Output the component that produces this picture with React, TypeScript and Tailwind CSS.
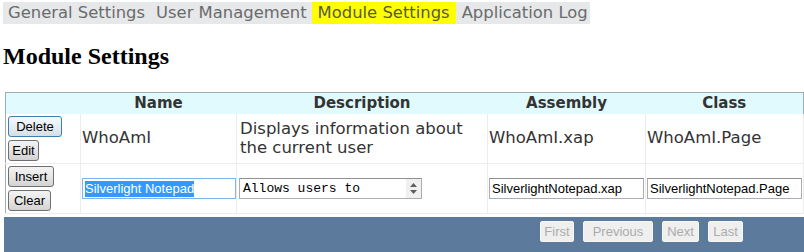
import React from "react";

const btnBase =
  "h-[21px] rounded-[3px] border text-[13px] leading-[19px] text-center text-black bg-gradient-to-b";

function Btn({ label, w, focused }: { label: string; w: string; focused?: boolean }) {
  return (
    <button
      className={`${btnBase} ${w} ${
        focused
          ? "border-[#3c7fb1] from-[#f5f9fc] via-[#e7eef3] to-[#d6dee4]"
          : "border-[#707070] from-[#f3f3f3] via-[#e6e6e6] to-[#d2d2d2]"
      }`}
      style={{ fontFamily: '"Liberation Sans", Arial, sans-serif' }}
    >
      {label}
    </button>
  );
}

function PagerBtn({ label, w }: { label: string; w: string }) {
  return (
    <span
      className={`${w} h-[21px] flex items-center justify-center rounded-[2px] border border-[#f7f7f7] bg-[#efefef] text-[13px] text-[#ababab]`}
    >
      {label}
    </span>
  );
}

export default function App() {
  const verdana = { fontFamily: '"DejaVu Sans", Verdana, sans-serif' };
  const arial = { fontFamily: '"Liberation Sans", Arial, sans-serif' };
  const mono = { fontFamily: '"Liberation Mono", "Courier New", monospace' };
  const cell = "border-r border-b border-[#ececec] p-0 align-middle";
  const inputBox =
    "h-[21px] border border-[#abadb3] border-t-[#8e9095] bg-white flex items-center text-[13px] text-black";
  const tab = "h-full flex items-center shrink-0 whitespace-nowrap";

  return (
    <div className="w-[804px] h-[252px] bg-white overflow-hidden relative">
      {/* Tabs */}
      <div
        className="ml-[3px] mt-[2px] w-fit h-[22px] bg-[#e6e8ea] flex items-center text-[16.4px] text-[#6b6b6b]"
        style={verdana}
      >
        <span className={`${tab} pl-[5px] pr-[6px]`}>General Settings</span>
        <span className={`${tab} px-[5px]`}>User Management</span>
        <span className={`${tab} px-[6px] bg-[#ffff00] text-[#5a5a3a]`}>Module Settings</span>
        <span className={`${tab} pl-[6px] pr-[2px]`}>Application Log</span>
      </div>

      {/* Heading */}
      <h2
        className="mt-[18px] ml-[3px] h-[28px] leading-[28px] text-[24px] font-bold text-black"
        style={{ fontFamily: '"Liberation Serif", "Times New Roman", serif' }}
      >
        Module Settings
      </h2>

      {/* Grid */}
      <div className="mt-[22px] ml-[5px] w-[798px]">
        <table
          className="table-fixed border-collapse w-[798px] border-t border-l border-r border-[#a3acb3]"
          style={verdana}
        >
          <colgroup>
            <col className="w-[75px]" />
            <col className="w-[156px]" />
            <col className="w-[251px]" />
            <col className="w-[158px]" />
            <col className="w-[158px]" />
          </colgroup>
          <thead>
            <tr className="h-[21px] bg-[#e0fafd] text-[15px] leading-[18px] font-bold text-[#333]">
              <th className="p-0"></th>
              <th className="p-0 text-center">Name</th>
              <th className="p-0 text-center">Description</th>
              <th className="p-0 text-center">Assembly</th>
              <th className="p-0 text-center">Class</th>
            </tr>
          </thead>
          <tbody className="text-[16.5px] text-[#333]">
            <tr className="h-[50px]">
              <td className={cell}>
                <div className="flex flex-col items-start gap-[3px] pl-[2px]">
                  <Btn label="Delete" w="w-[54px]" focused />
                  <Btn label="Edit" w="w-[31px]" />
                </div>
              </td>
              <td className={`${cell} pl-[1px]`}>WhoAmI</td>
              <td className={`${cell} pl-[3px] leading-[19px]`}>
                Displays information about the current user
              </td>
              <td className={`${cell} pl-[1px]`}>WhoAmI.xap</td>
              <td className={`${cell} pl-[1px]`}>WhoAmI.Page</td>
            </tr>
            <tr className="h-[50px]">
              <td className={cell}>
                <div className="flex flex-col items-start gap-[3px] pl-[2px]">
                  <Btn label="Insert" w="w-[46px]" />
                  <Btn label="Clear" w="w-[43px]" />
                </div>
              </td>
              <td className={`${cell} pl-[1px]`}>
                <div className="w-[154px] h-[21px] border border-[#7eb4ea] bg-white flex items-center pl-[2px] text-[13px] text-black" style={arial}>
                  <span className="bg-[#3399ff] text-white leading-[16px]">Silverlight Notepad</span>
                </div>
              </td>
              <td className={`${cell} pl-[2px]`}>
                <div className={`${inputBox} w-[183px]`} style={mono}>
                  <span className="pl-[3px] flex-1">Allows users to</span>
                  <span className="w-[15px] h-[19px] bg-[#f0f0f0] flex flex-col items-center justify-center gap-[3px]">
                    <svg width="7" height="4" viewBox="0 0 7 4"><path d="M0 4 L3.5 0 L7 4 Z" fill="#606060" /></svg>
                    <svg width="7" height="4" viewBox="0 0 7 4"><path d="M0 0 L3.5 4 L7 0 Z" fill="#606060" /></svg>
                  </span>
                </div>
              </td>
              <td className={`${cell} pl-[1px]`}>
                <div className={`${inputBox} w-[155px] pl-[2px]`} style={arial}>
                  SilverlightNotepad.xap
                </div>
              </td>
              <td className={`${cell} pl-[1px]`}>
                <div className={`${inputBox} w-[155px] pl-[2px]`} style={arial}>
                  SilverlightNotepad.Page
                </div>
              </td>
            </tr>
          </tbody>
        </table>
      </div>

      {/* Pager */}
      <div
        className="mt-[3px] ml-[4px] w-[800px] h-[40px] bg-[#5b7a9c] flex items-start pt-[4px] pl-[536px] gap-[9px]"
        style={arial}
      >
        <PagerBtn label="First" w="w-[34px]" />
        <PagerBtn label="Previous" w="w-[70px]" />
        <PagerBtn label="Next" w="w-[37px]" />
        <PagerBtn label="Last" w="w-[35px]" />
      </div>
    </div>
  );
}
